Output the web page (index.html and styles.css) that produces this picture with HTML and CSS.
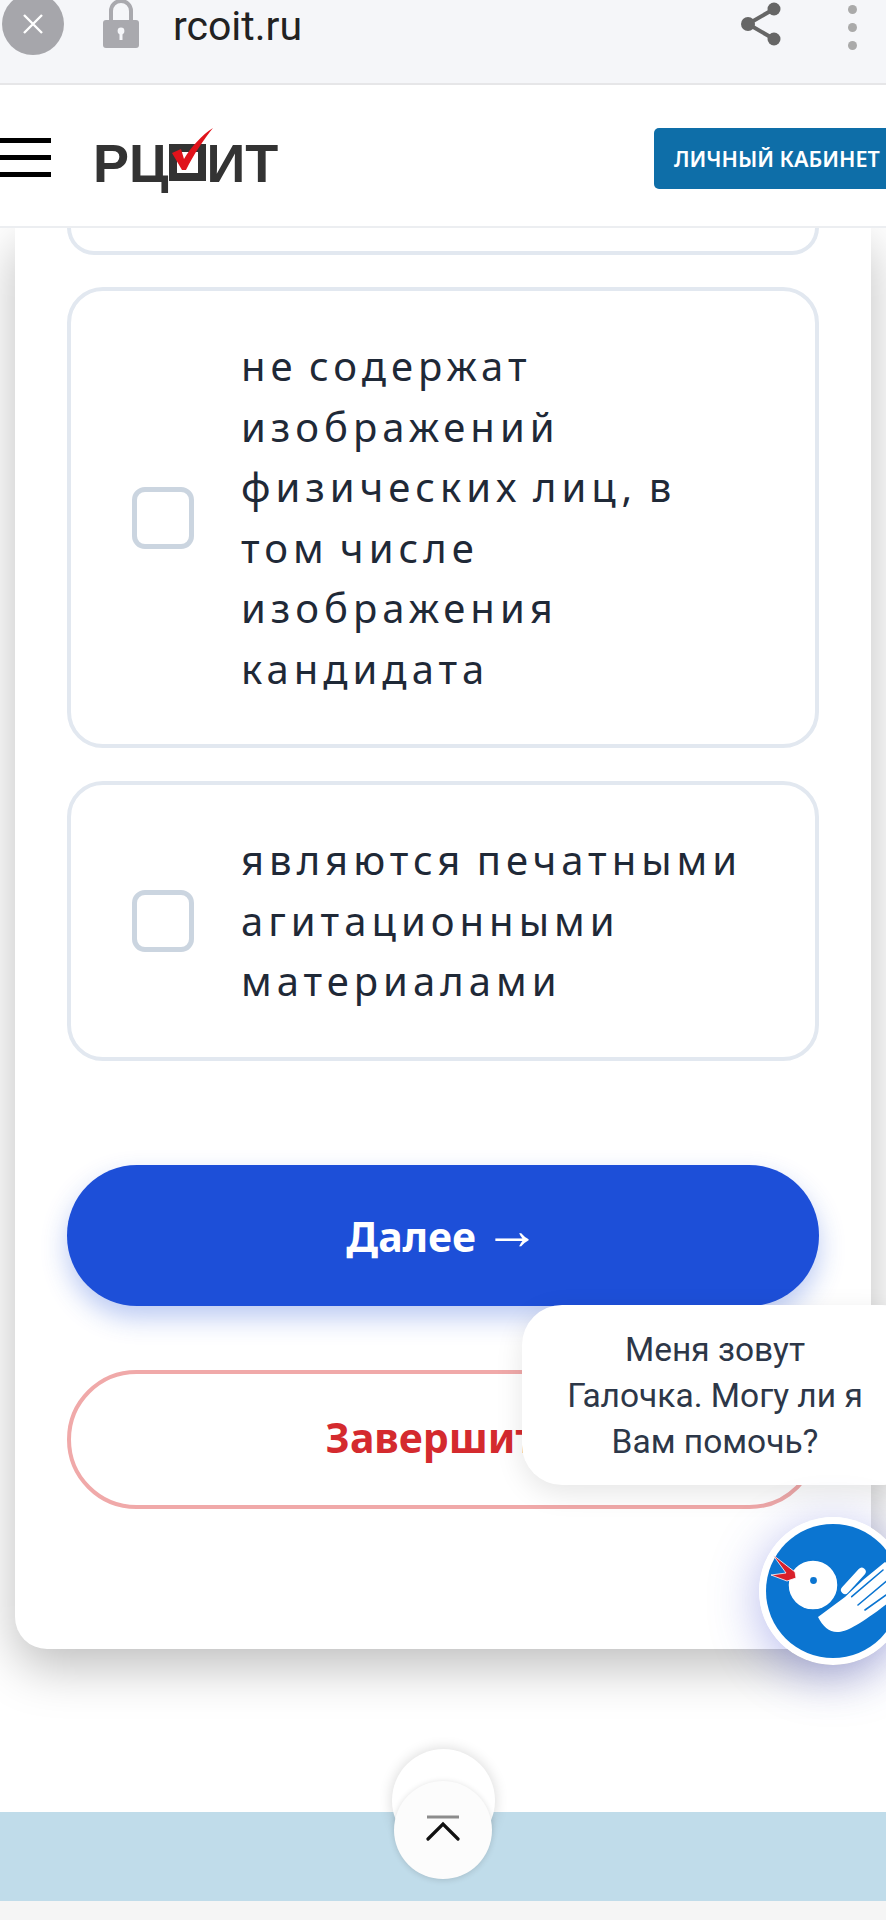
FILE: index.html
```html
<!DOCTYPE html>
<html lang="ru">
<head>
<meta charset="utf-8">
<title>rcoit.ru</title>
<link rel="stylesheet" href="styles.css">
</head>
<body>
<div class="page">
  <div class="browser">
    <div class="close-btn">
      <svg width="26" height="26" viewBox="0 0 26 26"><path d="M4 4L22 22M22 4L4 22" stroke="#fff" stroke-width="2.4" fill="none"/></svg>
    </div>
    <svg class="lock" width="38" height="48" viewBox="0 0 38 48"><path d="M9 24V11a10 10 0 0 1 20 0V24" fill="none" stroke="#a9a9ae" stroke-width="4"/><rect x="1" y="20" width="36" height="28" rx="3" fill="#a9a9ae"/><circle cx="19" cy="31" r="3.4" fill="#f5f6f9"/><rect x="17.5" y="32" width="3" height="8" fill="#f5f6f9"/></svg>
    <span class="url">rcoit.ru</span>
    <svg class="share" width="44" height="46" viewBox="0 0 44 46"><path d="M35 8L9 23L35 38" fill="none" stroke="#666" stroke-width="4"/><circle cx="35" cy="8" r="6.5" fill="#666"/><circle cx="9" cy="23" r="7" fill="#666"/><circle cx="35" cy="38" r="6.5" fill="#666"/></svg>
    <div class="dots"><i></i><i></i><i></i></div>
  </div>

  <header class="site-head">
    <div class="burger"><i></i><i></i><i></i></div>
    <div class="logo">
      <span class="logo-t">РЦ</span><span class="logo-box"></span><span class="logo-t">ИТ</span>
      <svg class="logo-check" width="46" height="46" viewBox="0 0 46 46"><path d="M2 27L11 23L14 33C21 21 32 9 43 2C34 13 24 28 16 44L12 44Z" fill="#e0131b"/></svg>
    </div>
    <a class="cabinet">ЛИЧНЫЙ КАБИНЕТ</a>
  </header>

  <main class="card">
    <div class="option-cut"></div>
    <label class="option">
      <span class="check"></span>
      <span class="opt-text">не содержат изображений физических лиц, в том числе изображения кандидата</span>
    </label>
    <label class="option">
      <span class="check"></span>
      <span class="opt-text">являются печатными агитационными материалами</span>
    </label>
    <button class="btn btn-next">Далее <span class="arrow">→</span></button>
    <button class="btn btn-finish">Завершить</button>
  </main>

  <footer class="foot">
    <div class="band"></div>
  </footer>

  <div class="tip">Меня зовут Галочка. Могу ли я Вам помочь?</div>

  <svg class="mascot" width="148" height="148" viewBox="0 0 148 148">
    <circle cx="74" cy="74" r="74" fill="#fff"/>
    <circle cx="74" cy="74" r="67" fill="#0b75d1"/>
    <path d="M86 73L102.700 54.700" stroke="#fff" stroke-width="8" stroke-linecap="round"/>
    <path d="M59 100C64 110 71 116 80 115C90 114 106 104 134 82L134 50L126 45L104 63L86 80Z" fill="#fff"/>
    <g stroke="#0b75d1" stroke-width="1.6" stroke-linecap="round">
      <path d="M92.700 79.700L124 53"/>
      <path d="M99 88L130 62"/>
      <path d="M106 93L134 73"/>
    </g>
    <circle cx="54" cy="68" r="25" fill="#fff" stroke="#0b75d1" stroke-width="1.5"/>
    <circle cx="54.500" cy="63.500" r="3.400" fill="#0b75d1"/>
    <path d="M14 38L36 55L37 61L28 64L12 58L27 56Z" fill="#d9202a" stroke="#fff" stroke-width=".8"/>
  </svg>

  <div class="top-back"></div>
  <div class="top-front">
    <svg width="34" height="26" viewBox="0 0 34 26"><path d="M1 2H33" stroke="#8c8c8c" stroke-width="3"/><path d="M2 24L17 9L32 24" fill="none" stroke="#111" stroke-width="3.2" stroke-linecap="round"/></svg>
  </div>
</div>
</body>
</html>
```
FILE: styles.css
```css
* { box-sizing: border-box; }
html, body { margin: 0; padding: 0; background: #fff; }
.page {
  position: relative;
  width: 886px;
  height: 1920px;
  overflow: hidden;
  background: #fff;
  font-family: "Noto Sans", sans-serif;
}

.browser {
  position: relative;
  z-index: 3;
  height: 85px;
  background: #f5f6f9;
  border-bottom: 2px solid #e6e6e8;
  display: flex;
  align-items: flex-start;
}
.close-btn {
  width: 62px;
  height: 62px;
  margin: -7px 0 0 2px;
  flex: none;
  border-radius: 50%;
  background: #a6a6ab;
  display: flex;
  align-items: center;
  justify-content: center;
}
.lock { flex: none; margin: 0 0 0 38px; }
.url {
  margin: 0 0 0 33px;
  font: 400 41px/52px Roboto, sans-serif;
  color: #222;
}
.share { flex: none; margin: 1px 0 0 auto; }
.dots {
  flex: none;
  width: 10px;
  margin: 5px 28px 0 65px;
  display: flex;
  flex-direction: column;
  gap: 9px;
}
.dots i { width: 9px; height: 9px; border-radius: 50%; background: #aaa; }

.site-head {
  position: relative;
  z-index: 2;
  height: 143px;
  background: #fff;
  border-bottom: 2px solid #eceef1;
  display: flex;
  align-items: center;
}
.burger {
  width: 51px;
  flex: none;
  display: flex;
  flex-direction: column;
  gap: 12px;
  margin-top: 3px;
}
.burger i { height: 5px; background: #000; }
.logo {
  position: relative;
  flex: none;
  display: flex;
  align-items: center;
  margin: 14px 0 0 42px;
  width: 186px;
  height: 52px;
  color: #333;
}
.logo-t {
  font: 700 54px/52px "Liberation Sans", sans-serif;
}
.logo-box {
  width: 37px;
  height: 37px;
  border: 8px solid #333;
  flex: none;
  margin: 0 0 0 1px;
}
.logo-check { position: absolute; left: 77px; top: -11px; }
.cabinet {
  margin: 6px 0 0 auto;
  width: 232px;
  flex: none;
  height: 61px;
  padding-left: 20px;
  background: #0e6ea8;
  border-radius: 5px 0 0 5px;
  color: #fff;
  font: 600 21.6px/61px "Noto Sans", sans-serif;
  white-space: nowrap;
}

.card {
  margin: 0 15px;
  padding: 0 52px;
  height: 1421px;
  background: #fff;
  border-radius: 0 0 32px 32px;
  box-shadow: 0 18px 50px rgba(0, 0, 0, .26);
  position: relative;
  z-index: 1;
  display: flex;
  flex-direction: column;
}
.option-cut {
  height: 27px;
  border: 4px solid #e2e8f0;
  border-top: 0;
  border-radius: 0 0 36px 36px;
  margin-bottom: 32px;
}
.option {
  display: flex;
  align-items: center;
  border: 4px solid #e2e8f0;
  border-radius: 36px;
  padding: 45px 40px 45px 61px;
  margin-bottom: 33px;
  background: #fff;
}
.check {
  flex: none;
  width: 62px;
  height: 62px;
  border: 5px solid #cbd5e0;
  border-radius: 13px;
  margin-right: 47px;
}
.opt-text {
  font: 400 40px/60.5px "Noto Sans", sans-serif;
  letter-spacing: 5px;
  word-spacing: -4px;
  color: #1f2937;
}
.btn {
  display: block;
  width: 100%;
  border-radius: 70px;
  padding: 0 0 4px;
  font: 700 41px/1 "Noto Sans", sans-serif;
  cursor: pointer;
}
.arrow {
  font: 700 56px/40px "Liberation Sans", sans-serif;
  vertical-align: 3px;
}
.btn-next {
  height: 141px;
  margin-top: 71px;
  border: 0;
  background: #1d4fd8;
  color: #fff;
  word-spacing: -3px;
  box-shadow: 0 12px 26px rgba(29, 79, 216, .3);
}
.btn-finish {
  height: 139px;
  margin-top: 64px;
  border: 4px solid #f0a9a9;
  background: #fff;
  color: #d42a2e;
}

.foot {
  margin-top: 163px;
  padding-bottom: 20px;
  background: #f5f5f5;
}
.band { height: 89px; background: #c0dcea; }

.tip {
  position: absolute;
  z-index: 4;
  left: 522px;
  top: 1305px;
  width: 400px;
  height: 180px;
  padding: 22px 58px 0 44px;
  background: #fff;
  border-radius: 40px;
  box-shadow: 0 8px 28px rgba(0, 0, 0, .1);
  font: 400 33.5px/46px Roboto, sans-serif;
  color: #2d3748;
  text-align: center;
}
.mascot {
  position: absolute;
  z-index: 4;
  left: 759px;
  top: 1517px;
  border-radius: 50%;
  box-shadow: 0 10px 50px rgba(70, 80, 210, .4);
}
.top-back {
  position: absolute;
  z-index: 4;
  left: 392px;
  top: 1749px;
  width: 103px;
  height: 103px;
  border-radius: 50%;
  background: #fff;
  box-shadow: 0 0 14px rgba(0, 0, 0, .16);
}
.top-front {
  position: absolute;
  z-index: 5;
  left: 394px;
  top: 1781px;
  width: 98px;
  height: 98px;
  border-radius: 50%;
  background: #fcfcfc;
  box-shadow: 0 1px 6px rgba(0, 0, 0, .14);
  display: flex;
  align-items: center;
  justify-content: center;
  padding-bottom: 4px;
}
```
